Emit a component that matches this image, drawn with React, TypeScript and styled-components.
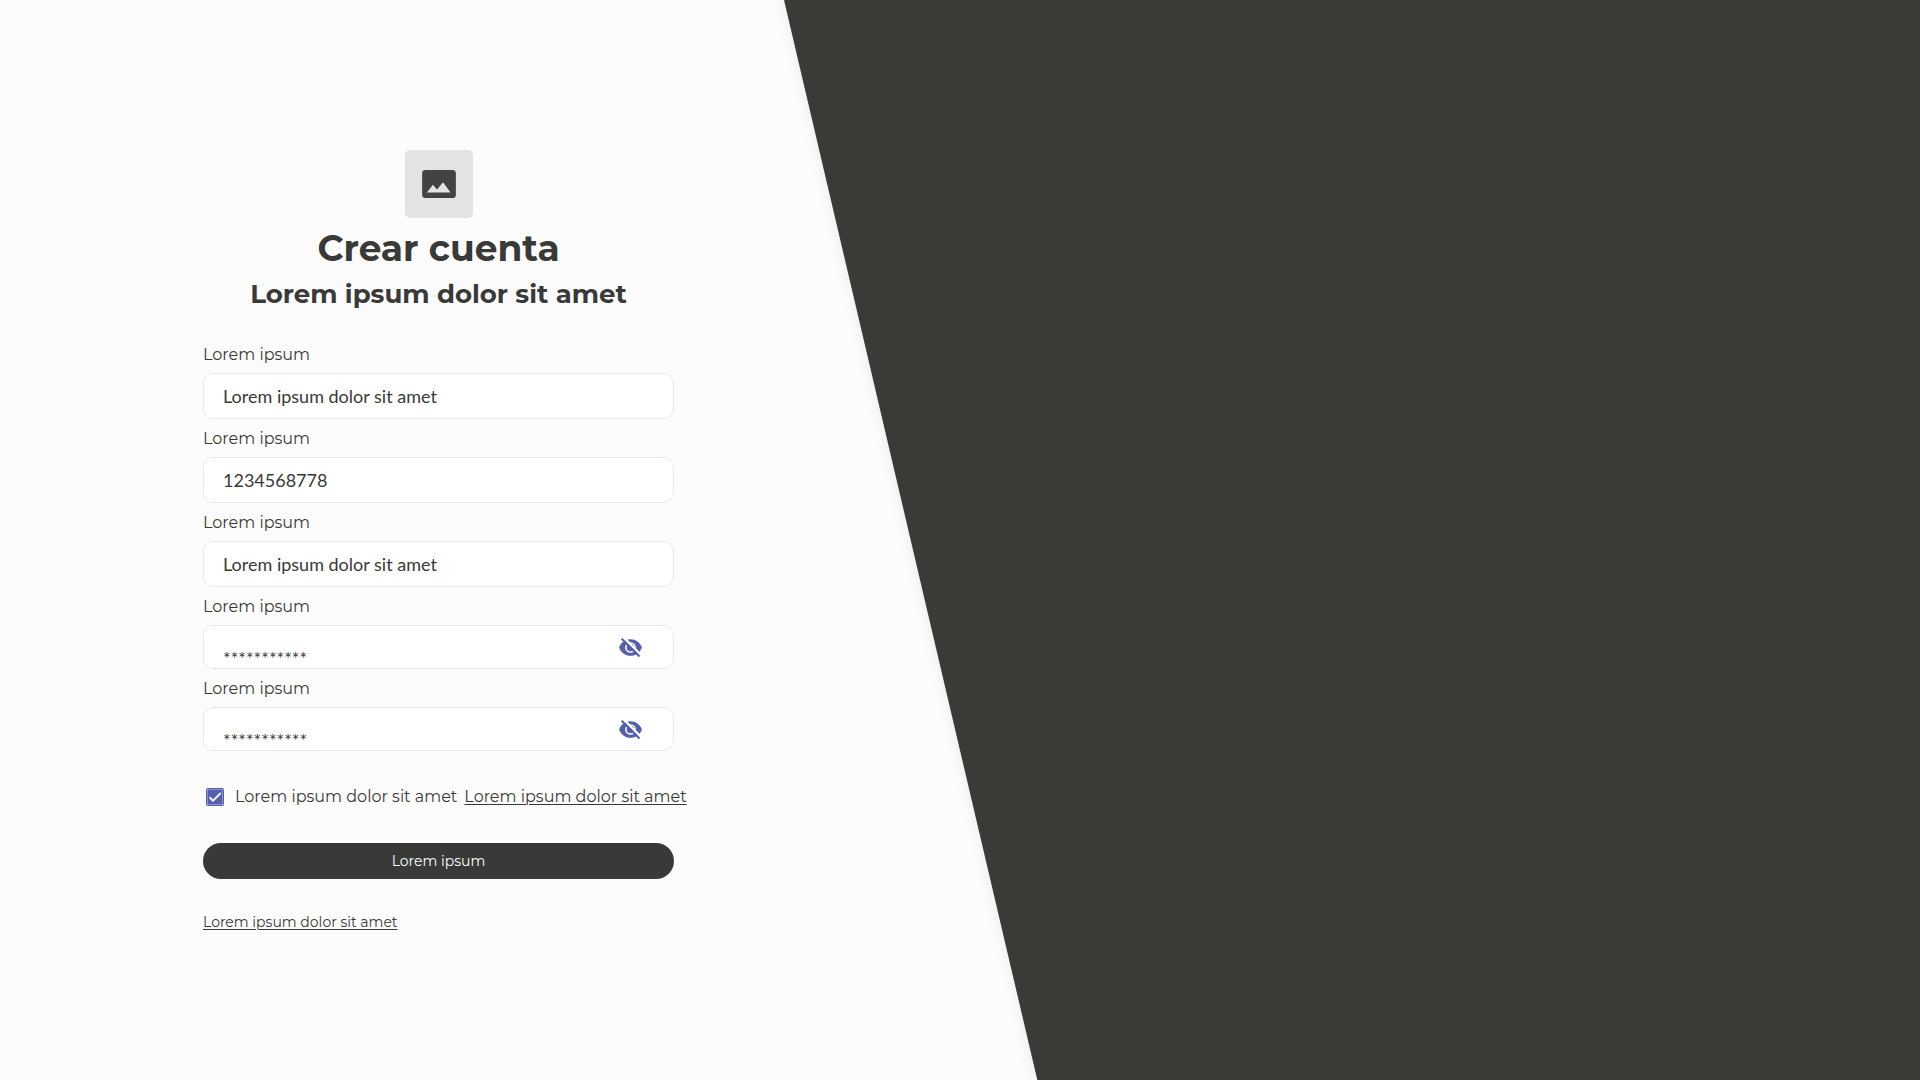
import React, { useId, useState } from "react";
import styled, { createGlobalStyle } from "styled-components";
import { MdCheck } from "react-icons/md";

const ink = "#393a37";
const indigo = "#545fad";
const heading = `Montserrat, Inter, "Open Sans", sans-serif`;

const GlobalStyle = createGlobalStyle`
  *, *::before, *::after { box-sizing: border-box; }
  body { margin: 0; background: #fcfcfc; color: ${ink}; font-family: ${heading}; }
  h1, h2 { margin: 0; }
`;

const Page = styled.div`
  display: grid;
  grid-template-columns: 49fr 71fr;
  min-height: 100vh;
`;

const FormSide = styled.main`
  display: flex;
  align-items: center;
  justify-content: center;
  padding: 26px 0 24px 93px;
`;

const ArtSide = styled.aside`
  display: flex;
  filter: drop-shadow(-3px 0 5px rgba(0, 0, 0, 0.05));
`;

const Slant = styled.div`
  flex: 1;
  background: #393b37;
  clip-path: polygon(0 0, 100% 0, 100% 100%, 22.3% 100%);
`;

const Form = styled.form`
  display: flex;
  flex-direction: column;
  width: 100%;
  max-width: 471px;
`;

const Header = styled.header`
  display: flex;
  flex-direction: column;
  align-items: center;
  text-align: center;
  margin-bottom: 27px;
`;

const Logo = styled.div`
  display: grid;
  place-items: center;
  width: 68px;
  height: 68px;
  border-radius: 5px;
  background: #e3e3e3;
`;

const Title = styled.h1`
  margin-top: 7px;
  font-size: 36px;
  line-height: 46px;
  font-weight: 700;
`;

const Subtitle = styled.h2`
  font-size: 26px;
  line-height: 46px;
  font-weight: 700;
`;

const Fields = styled.div`
  display: flex;
  flex-direction: column;
  gap: 9px;
`;

const FieldBox = styled.div`
  display: flex;
  flex-direction: column;
  gap: 7px;
`;

const FieldLabel = styled.label`
  font-size: 16px;
  line-height: 22px;
`;

const InputShell = styled.div<{ $secret?: boolean }>`
  display: flex;
  align-items: center;
  height: ${(p) => (p.$secret ? 44 : 46)}px;
  padding: 0 30px 0 19px;
  border: 1px solid #efe5fa;
  border-radius: 10px;
  background: #fff;

  &:focus-within { border-color: ${indigo}; }
`;

const Input = styled.input<{ $secret?: boolean }>`
  flex: 1;
  min-width: 0;
  height: 100%;
  padding: ${(p) => (p.$secret ? "22px 0 0" : "0")};
  border: 0;
  outline: 0;
  background: none;
  color: ${ink};
  font-family: Lato, sans-serif;
  font-size: 18px;
`;

const IconButton = styled.button`
  display: flex;
  padding: 0;
  border: 0;
  background: none;
  color: ${indigo};
  cursor: pointer;
`;

const Terms = styled.div`
  display: flex;
  align-items: center;
  gap: 7px;
  margin-top: 35px;
  font-size: 16px;
  line-height: 22px;
  white-space: nowrap;
`;

const TermsLabel = styled.label`
  display: flex;
  align-items: center;
  gap: 11px;
  padding-left: 3px;
  cursor: pointer;
`;

const Tick = styled.span`
  display: grid;
  place-items: center;
  color: #fff;
  font-size: 16px;

  > * { grid-area: 1 / 1; }
  svg { pointer-events: none; stroke: currentColor; stroke-width: 1; }
`;

const Checkbox = styled.input`
  appearance: none;
  width: 18px;
  height: 18px;
  margin: 0;
  border: 2px solid ${indigo};
  border-radius: 2px;

  &:checked { background: ${indigo}; }
`;

const Submit = styled.button`
  height: 36px;
  margin-top: 35px;
  border: 0;
  border-radius: 18px;
  background: ${ink};
  color: #fcfcfc;
  font-family: inherit;
  font-size: 14px;
  cursor: pointer;
`;

const Link = styled.a<{ $small?: boolean }>`
  color: inherit;
  font-size: ${(p) => (p.$small ? 14 : 16)}px;
  text-decoration: underline;
  text-underline-offset: 2px;
  text-decoration-thickness: 1px;
`;

const Footer = styled.div`
  margin-top: 33px;
  line-height: 20px;
`;

function PictureIcon() {
  return (
    <svg width="34" height="28" viewBox="0 0 100 83" aria-hidden="true">
      <path
        fill="#434343"
        fillRule="evenodd"
        d="M10 0H90Q100 0 100 10V73Q100 83 90 83H10Q0 83 0 73V10Q0 0 10 0ZM14 67H84L62 36L44 58L32 44Z"
      />
    </svg>
  );
}

function HiddenIcon() {
  const id = useId();
  return (
    <svg width="25" height="25" viewBox="0 0 240 240" fill="none" aria-hidden="true">
      <mask id={id}>
        <path fill="#fff" d="M10 120C28 70 70 40 120 40S212 70 230 120C212 170 170 200 120 200S28 170 10 120Z" />
        <circle cx="120" cy="120" r="44" stroke="#000" strokeWidth="15" />
        <path d="M40 10L230 200" stroke="#000" strokeWidth="22" />
      </mask>
      <rect width="240" height="240" fill="currentColor" mask={`url(#${id})`} />
      <path d="M35 35L207 207" stroke="currentColor" strokeWidth="20" />
    </svg>
  );
}

function Field({ label, value, secret }: { label: string; value: string; secret?: boolean }) {
  const id = useId();
  const [text, setText] = useState(value);
  return (
    <FieldBox>
      <FieldLabel htmlFor={id}>{label}</FieldLabel>
      <InputShell $secret={secret}>
        <Input id={id} type="text" $secret={secret} value={text} onChange={(e) => setText(e.target.value)} />
        {secret && (
          <IconButton type="button" aria-label="Mostrar">
            <HiddenIcon />
          </IconButton>
        )}
      </InputShell>
    </FieldBox>
  );
}

export default function App() {
  const [accepted, setAccepted] = useState(true);
  return (
    <>
      <GlobalStyle />
      <Page>
        <FormSide>
          <Form onSubmit={(e) => e.preventDefault()}>
            <Header>
              <Logo><PictureIcon /></Logo>
              <Title>Crear cuenta</Title>
              <Subtitle>Lorem ipsum dolor sit amet</Subtitle>
            </Header>
            <Fields>
              <Field label="Lorem ipsum" value="Lorem ipsum dolor sit amet" />
              <Field label="Lorem ipsum" value="1234568778" />
              <Field label="Lorem ipsum" value="Lorem ipsum dolor sit amet" />
              <Field label="Lorem ipsum" value="***********" secret />
              <Field label="Lorem ipsum" value="***********" secret />
            </Fields>
            <Terms>
              <TermsLabel>
                <Tick>
                  <Checkbox type="checkbox" checked={accepted} onChange={(e) => setAccepted(e.target.checked)} />
                  {accepted && <MdCheck />}
                </Tick>
                Lorem ipsum dolor sit amet
              </TermsLabel>
              <Link href="#">Lorem ipsum dolor sit amet</Link>
            </Terms>
            <Submit type="submit">Lorem ipsum</Submit>
            <Footer>
              <Link href="#" $small>Lorem ipsum dolor sit amet</Link>
            </Footer>
          </Form>
        </FormSide>
        <ArtSide><Slant /></ArtSide>
      </Page>
    </>
  );
}
